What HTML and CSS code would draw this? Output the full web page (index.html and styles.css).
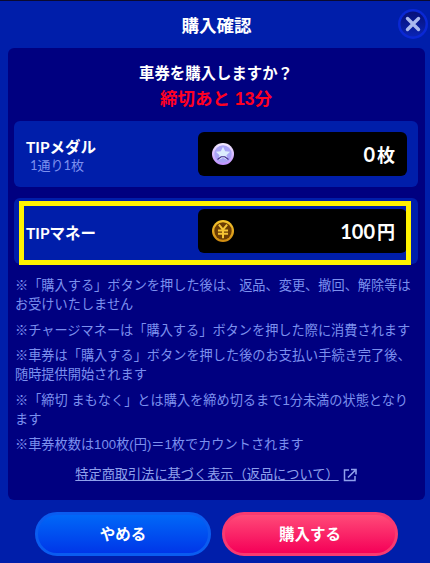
FILE: index.html
```html
<!DOCTYPE html>
<html lang="ja">
<head>
<meta charset="utf-8">
<title>購入確認</title>
<link rel="stylesheet" href="styles.css">
</head>
<body>
<div class="modal">
  <header class="head">
    <h1 class="title">購入確認</h1>
    <button class="close" aria-label="閉じる">
      <svg viewBox="0 0 30 30" width="30" height="30"><defs><linearGradient id="c" x1="0" y1="0" x2="0" y2="1"><stop offset="0" stop-color="#061078"/><stop offset="1" stop-color="#0a24b4"/></linearGradient></defs><circle cx="15" cy="15" r="15" fill="#0a28d4"/><circle cx="15" cy="15" r="12.500" fill="url(#c)"/><path d="M9.500 9.500l11 11M20.500 9.500l-11 11" stroke="#aab8ee" stroke-width="3.400" stroke-linecap="round"/></svg>
    </button>
  </header>
  <main class="panel">
    <p class="ask">車券を購入しますか？</p>
    <p class="deadline">締切あと 13分</p>
    <section class="row">
      <div class="label"><div class="name">TIPメダル</div><div class="sub">1通り1枚</div></div>
      <div class="value">
        <svg class="coin" viewBox="0 0 24 24" width="22" height="22"><defs><linearGradient id="m" x1="0" y1="0" x2="0" y2="1"><stop offset="0" stop-color="#f4ecff"/><stop offset="1" stop-color="#c090ff"/></linearGradient></defs><circle cx="12" cy="12" r="12" fill="url(#m)"/><circle cx="12" cy="12" r="9.500" fill="#a9a4f6"/><path d="M12 4l2.400 5 5.400.6-4 3.700 1.100 5.300L12 16l-4.900 2.600 1.100-5.300-4-3.700 5.400-.6z" fill="#dcedfd"/><path d="M6 18l4-3h4l4 3" fill="none" stroke="#43288c" stroke-width="1.300"/></svg>
        <span class="amount">0<span class="unit">枚</span></span>
      </div>
    </section>
    <section class="row selected">
      <div class="label"><div class="name">TIPマネー</div></div>
      <div class="value">
        <svg class="coin" viewBox="0 0 24 24" width="22" height="22"><defs><linearGradient id="g" x1="0" y1="0" x2="0" y2="1"><stop offset="0" stop-color="#f7c62e"/><stop offset="1" stop-color="#cf8a10"/></linearGradient></defs><circle cx="12" cy="12" r="12" fill="url(#g)"/><circle cx="12" cy="12" r="9.500" fill="#6b3c04"/><path d="M7.500 5L12 10.500 16.500 5M6.500 11.500h11M6.500 15h11M12 10.500V20" fill="none" stroke="#f6c535" stroke-width="2.200"/></svg>
        <span class="amount">100<span class="unit">円</span></span>
      </div>
    </section>
    <div class="notes">
      <p>※「購入する」ボタンを押した後は、返品、変更、撤回、解除等はお受けいたしません</p>
      <p>※チャージマネーは「購入する」ボタンを押した際に消費されます</p>
      <p>※車券は「購入する」ボタンを押した後のお支払い手続き完了後、随時提供開始されます</p>
      <p>※「締切 まもなく」とは購入を締め切るまで1分未満の状態となります</p>
      <p>※車券枚数は100枚(円)＝1枚でカウントされます</p>
    </div>
    <div class="legal">
      <a class="legal-link" href="#">特定商取引法に基づく表示（返品について）</a>
      <svg class="ext" viewBox="0 0 14 14" width="14" height="14"><path d="M6 2H1.500v10.500H12V8" fill="none" stroke="#8fa0ec" stroke-width="1.500"/><path d="M5 9.500L12 2.500M8 1.500h5v5" fill="none" stroke="#8fa0ec" stroke-width="1.600"/></svg>
    </div>
  </main>
  <footer class="actions">
    <button class="btn cancel">やめる</button>
    <button class="btn buy">購入する</button>
  </footer>
</div>
</body>
</html>
```
FILE: styles.css
```css
* { box-sizing: border-box; }
html, body { margin: 0; height: 100%; }
body {
  background: #001eaa;
  font-family: "Liberation Sans", "Noto Sans CJK JP", sans-serif;
  overflow: hidden;
}
.modal {
  width: 430px;
  height: 563px;
  border-top: 1px solid #0a0a30;
  padding: 0 5px 0 8px;
  display: flex;
  flex-direction: column;
}
.head {
  height: 47px;
  display: flex;
  align-items: center;
  justify-content: center;
  position: relative;
  flex: none;
}
.title {
  margin: 0 0 1px;
  color: #fff;
  font-size: 17.500px;
  font-weight: 700;
}
.close {
  position: absolute;
  right: -4px;
  top: 7px;
  width: 32px;
  height: 32px;
  padding: 1px;
  border: 0;
  background: none;
}
.panel {
  height: 452px;
  flex: none;
  background: #000080;
  border-radius: 6px;
  padding: 13px 7px 0 6px;
}
.ask {
  margin: 0;
  color: #fff;
  font-size: 15.400px;
  font-weight: 700;
  line-height: 26px;
  text-align: center;
}
.deadline {
  margin: 0 0 10px;
  color: #ff0022;
  font-size: 17.500px;
  font-weight: 700;
  line-height: 24px;
  text-align: center;
}
.row {
  height: 66px;
  background: #001eaa;
  border-radius: 6px;
  display: flex;
  align-items: center;
  justify-content: space-between;
  padding: 0 11px 0 12px;
  margin-bottom: 11px;
}
.row.selected {
  position: relative;
  margin-bottom: 12px;
}
.row.selected::after {
  content: "";
  position: absolute;
  left: 5px;
  right: 7px;
  top: 3px;
  bottom: -1px;
  border: 5px solid #fff200;
}
.label { padding-top: 3px; }
.name {
  color: #fff;
  font-family: Lato, "Noto Sans CJK JP", sans-serif;
  font-size: 15.500px;
  font-weight: 700;
  line-height: 18px;
}
.sub {
  color: #7c90ee;
  font-family: Lato, "Noto Sans CJK JP", sans-serif;
  font-size: 13px;
  line-height: 18px;
  padding-left: 4px;
}
.value {
  width: 209px;
  height: 44px;
  background: #000;
  border-radius: 6px;
  display: flex;
  align-items: center;
  justify-content: space-between;
  padding: 0 12px 0 14px;
}
.coin { display: block; flex: none; }
.amount {
  color: #fff;
  font-family: Lato, "Noto Sans CJK JP", sans-serif;
  font-size: 20px;
  font-weight: 700;
}
.unit { font-size: 18px; margin-left: 2px; }
.notes p {
  margin: 0 0 6.500px;
  color: #7c90ee;
  font-size: 13.200px;
  line-height: 19px;
  padding: 0 1px;
}
.legal {
  display: flex;
  justify-content: center;
  align-items: center;
  gap: 4px;
  margin-top: 12px;
}
.legal-link {
  color: #8fa0ec;
  font-size: 13.200px;
  line-height: 18px;
}
.ext { display: block; flex: none; }
.actions {
  flex: 1;
  display: flex;
  justify-content: center;
  gap: 11px;
  padding: 12px 0 0 0;
}
.btn {
  width: 176px;
  height: 44px;
  border-radius: 22px;
  color: #fff;
  font-family: "Noto Sans CJK JP", sans-serif;
  font-size: 15.500px;
  font-weight: 700;
  padding: 0 0 3px;
}
.cancel {
  border: 3px solid #0a5cf0;
  background: linear-gradient(#0068f8, #0036e8);
}
.buy {
  border: 3px solid #f83a70;
  background: linear-gradient(#ff4a78, #f50058);
}
```
